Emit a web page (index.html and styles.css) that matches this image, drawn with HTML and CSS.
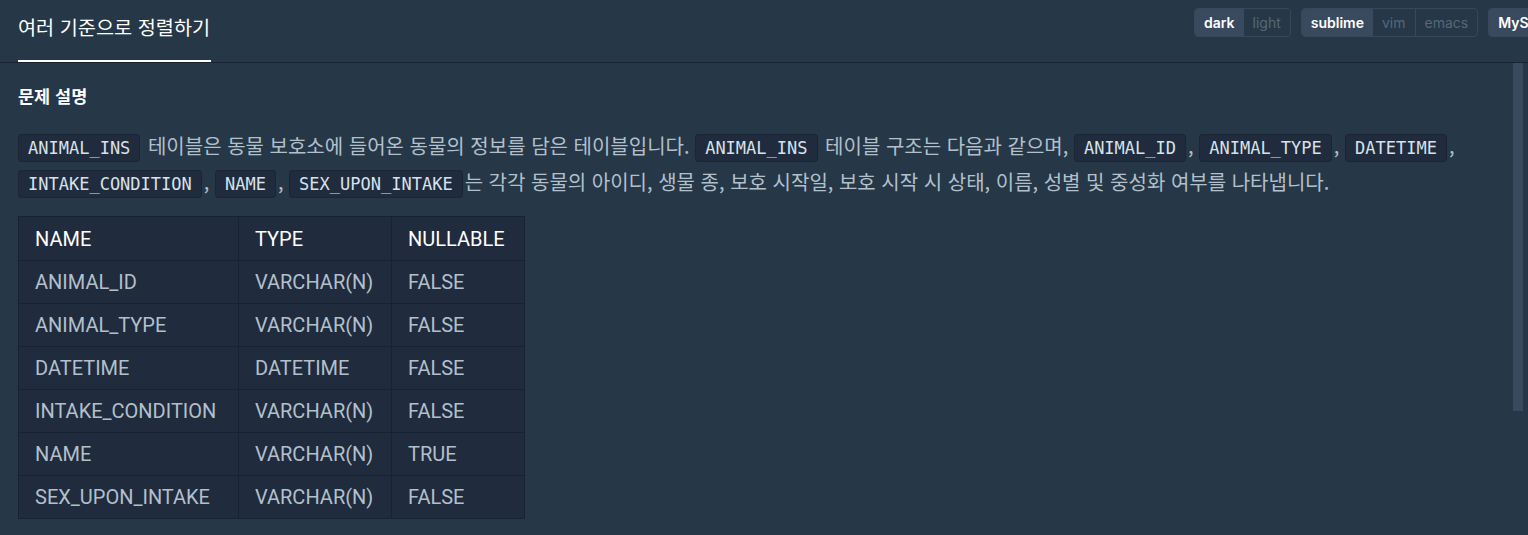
FILE: index.html
```html
<!DOCTYPE html>
<html lang="ko">
<head>
<meta charset="utf-8">
<title>여러 기준으로 정렬하기</title>
<link rel="stylesheet" href="styles.css">
</head>
<body>
<div class="page">
  <header class="topbar">
    <div class="tab">여러 기준으로 정렬하기</div>
    <div class="toggles">
      <div class="seg-group">
        <span class="seg active">dark</span><span class="seg">light</span>
      </div>
      <div class="seg-group">
        <span class="seg active">sublime</span><span class="seg">vim</span><span class="seg sep">emacs</span>
      </div>
      <div class="seg-group">
        <span class="seg active">MySQL</span>
      </div>
    </div>
  </header>
  <main class="body">
    <div class="content">
      <h5 class="section-title">문제 설명</h5>
      <p class="desc"><code class="code">ANIMAL_INS</code> 테이블은 동물 보호소에 들어온 동물의 정보를 담은 테이블입니다. <code class="code">ANIMAL_INS</code> 테이블 구조는 다음과 같으며, <code class="code">ANIMAL_ID</code>, <code class="code">ANIMAL_TYPE</code>, <code class="code">DATETIME</code>, <code class="code">INTAKE_CONDITION</code>, <code class="code">NAME</code>, <code class="code">SEX_UPON_INTAKE</code>는 각각 동물의 아이디, 생물 종, 보호 시작일, 보호 시작 시 상태, 이름, 성별 및 중성화 여부를 나타냅니다.</p>
      <table class="schema">
        <thead>
          <tr><th class="c1">NAME</th><th class="c2">TYPE</th><th class="c3">NULLABLE</th></tr>
        </thead>
        <tbody>
          <tr><td>ANIMAL_ID</td><td>VARCHAR(N)</td><td>FALSE</td></tr>
          <tr><td>ANIMAL_TYPE</td><td>VARCHAR(N)</td><td>FALSE</td></tr>
          <tr><td>DATETIME</td><td>DATETIME</td><td>FALSE</td></tr>
          <tr><td>INTAKE_CONDITION</td><td>VARCHAR(N)</td><td>FALSE</td></tr>
          <tr><td>NAME</td><td>VARCHAR(N)</td><td>TRUE</td></tr>
          <tr><td>SEX_UPON_INTAKE</td><td>VARCHAR(N)</td><td>FALSE</td></tr>
        </tbody>
      </table>
    </div>
    <div class="scroll-thumb"></div>
  </main>
</div>
</body>
</html>
```
FILE: styles.css
```css
html, body {
  margin: 0;
  padding: 0;
  background: #263747;
  overflow: hidden;
}
.page {
  width: 1528px;
  height: 535px;
  display: flex;
  flex-direction: column;
  font-family: "Noto Sans CJK KR", "Noto Sans", sans-serif;
  color: #b2c0cc;
}
.topbar {
  height: 62px;
  flex: 0 0 auto;
  display: flex;
  align-items: flex-start;
  border-bottom: 1px solid #172334;
  overflow: hidden;
  padding-left: 18px;
}
.tab {
  box-sizing: border-box;
  height: 63px;
  margin-bottom: -1px;
  width: 193px;
  flex: 0 0 auto;
  display: flex;
  align-items: center;
  padding-bottom: 7px;
  border-bottom: 3px solid #ffffff;
  color: #ffffff;
  font-size: 19.7px;
  font-weight: 400;
  white-space: nowrap;
}
.toggles {
  display: flex;
  gap: 10px;
  margin-left: 983px;
  padding-top: 8px;
  flex: 0 0 auto;
}
.seg-group {
  display: flex;
  height: 29px;
  box-sizing: border-box;
  border: 1px solid #37485c;
  border-radius: 4px;
  overflow: hidden;
  flex: 0 0 auto;
}
.seg {
  display: flex;
  align-items: center;
  padding: 0 9px;
  font-family: Inter, "Noto Sans", sans-serif;
  font-size: 14px;
  font-weight: 400;
  color: #56677a;
  white-space: nowrap;
}
.seg.active {
  background: #3a4a5e;
  color: #ffffff;
  font-weight: 600;
}
.seg.sep {
  border-left: 1px solid #37485c;
}
.body {
  position: relative;
  height: 472px;
  overflow: hidden;
}
.scroll-thumb {
  position: absolute;
  top: 0;
  right: 5px;
  width: 10px;
  height: 348px;
  background: #3a495e;
}
.content {
  box-sizing: border-box;
  padding: 21px 33px 0 18px;
}
.section-title {
  margin: 0 0 20px 0;
  font-size: 17.5px;
  line-height: 24px;
  font-weight: 700;
  color: #ffffff;
}
.desc {
  margin: 0;
  font-size: 20px;
  line-height: 36px;
  color: #b2c0cc;
}
.code {
  font-family: "DejaVu Sans Mono", "Liberation Mono", monospace;
  font-size: 17px;
  line-height: 20px;
  color: #d7e2eb;
  background: #202b3d;
  border: 1px solid #1a2535;
  border-radius: 4px;
  padding: 3px 9px;
  margin-right: 2px;
}
.schema {
  margin-top: 16px;
  border-collapse: collapse;
  background: #202b3d;
  font-family: Roboto, "Noto Sans", sans-serif;
  font-size: 20px;
}
.schema th,
.schema td {
  border: 1px solid #172334;
  padding: 0 16px;
  text-align: left;
  white-space: nowrap;
}
.schema th {
  height: 43px;
  font-weight: 400;
  color: #ffffff;
}
.schema td {
  height: 42px;
  color: #b2c0cc;
}
.c1 { width: 187px; }
.c2 { width: 120px; }
.c3 { width: 100px; }
```
